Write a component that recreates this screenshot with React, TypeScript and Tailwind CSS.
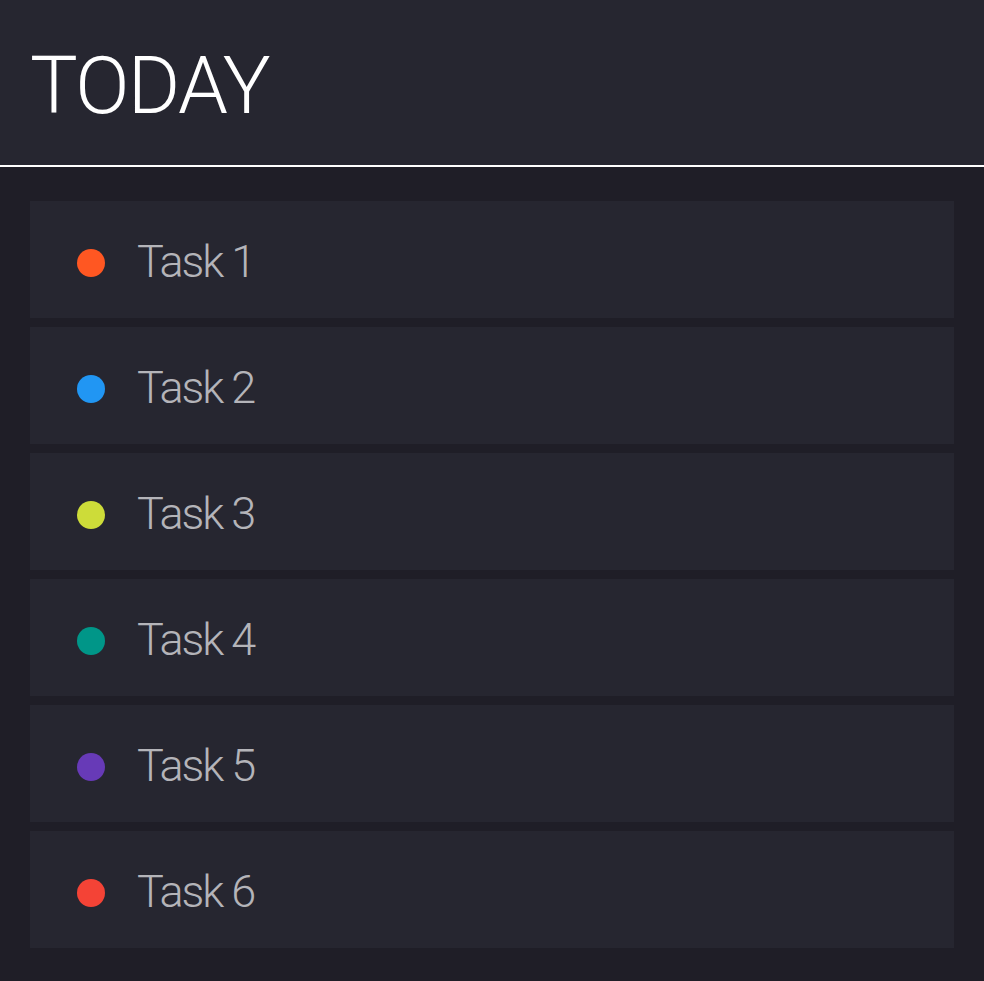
import React from "react";

interface Task {
  id: number;
  title: string;
  color: string;
}

const tasks: Task[] = [
  { id: 1, title: "Task 1", color: "bg-[#ff5722]" },
  { id: 2, title: "Task 2", color: "bg-[#2196f3]" },
  { id: 3, title: "Task 3", color: "bg-[#cddc39]" },
  { id: 4, title: "Task 4", color: "bg-[#009688]" },
  { id: 5, title: "Task 5", color: "bg-[#673ab7]" },
  { id: 6, title: "Task 6", color: "bg-[#f44336]" },
];

const TaskRow: React.FC<{ task: Task }> = ({ task }) => (
  <div className="flex h-[117px] items-center bg-[#262630] pl-[47px] pt-[4px]">
    <span className={`mt-[3px] h-[28px] w-[28px] shrink-0 rounded-full ${task.color}`} />
    <span className="ml-[32px] text-[45px] font-light tracking-[-2px] text-[#b4b4b9]">{task.title}</span>
  </div>
);

const App: React.FC = () => {
  return (
    <div className="min-h-[981px] bg-[#1f1e27] font-['Roboto',sans-serif]">
      {/* header */}
      <div className="h-[167px] border-b-2 border-white bg-[#262630] pl-[30px] pt-[39px]">
        <h1 className="text-[80px] font-light leading-[94px] tracking-[-1.5px] text-white">TODAY</h1>
      </div>

      {/* task list */}
      <div className="flex flex-col gap-[9px] px-[30px] pb-[33px] pt-[34px]">
        {tasks.map((task) => (
          <TaskRow key={task.id} task={task} />
        ))}
      </div>
    </div>
  );
};

export default App;
